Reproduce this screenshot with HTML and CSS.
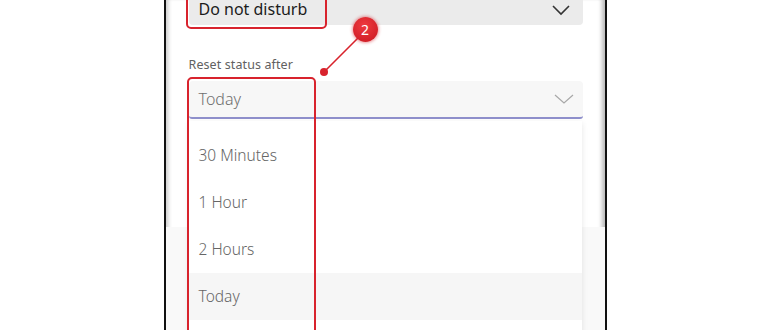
FILE: index.html
```html
<!DOCTYPE html>
<html lang="en">

<head>
  <title>Set status</title>
  <link rel="stylesheet" href="styles.css">
</head>

<body>
  <div class="frame">
    <div class="panel">
      <div class="select status-select">
        <span>Do not disturb</span>
        <svg class="chevron" width="20" height="12" viewBox="0 0 20 12">
          <polyline points="2,2 10,10 18,2" fill="none" stroke="#333" stroke-width="1.6" />
        </svg>
      </div>

      <label class="field-label">Reset status after</label>
      <div class="select reset-select">
        <span>Today</span>
        <svg class="chevron" width="20" height="12" viewBox="0 0 20 12">
          <polyline points="1,2 10,10 19,2" fill="none" stroke="#a8a8a8" stroke-width="1.2" />
        </svg>
      </div>
    </div>

    <div class="footer"></div>

    <!-- dropdown menu -->
    <ul class="menu">
      <li>30 Minutes</li>
      <li>1 Hour</li>
      <li>2 Hours</li>
      <li class="selected">Today</li>
    </ul>

    <!-- annotations -->
    <div class="mark mark-status"></div>
    <div class="mark mark-reset"></div>
    <svg class="leader" width="60" height="50" viewBox="0 0 60 50">
      <line x1="40" y1="8" x2="6" y2="42" stroke="#d8232d" stroke-width="1.6" />
      <circle cx="6" cy="42" r="4" fill="#d8232d" />
    </svg>
    <div class="badge">2</div>
  </div>
</body>

</html>
```

FILE: styles.css
```css
body {
  margin: 0;
  background-color: #ffffff;
  font-family: 'Noto Sans', 'Open Sans', sans-serif;
}

.frame {
  position: relative;
  width: 439px;
  height: 330px;
  margin: 0 auto;
  border-left: 2px solid #111111;
  border-right: 2px solid #111111;
  overflow: hidden;
  background-color: #ffffff;
  box-shadow: inset 5px 0 4px -3px #c8c8c8, inset -6px 0 4px -3px #b8b8b8;
}

.panel {
  display: flow-root;
  padding: 0 22px 0 23px;
  height: 227px;
}

.select {
  display: flex;
  align-items: center;
  justify-content: space-between;
  padding: 0 9px 0 10px;
  border-radius: 4px;
}

.status-select {
  margin-top: -11px;
  height: 36px;
  background-color: #ebebeb;
  font-size: 16px;
  line-height: 18px;
  color: #1b1b1b;
}

.status-select span {
  padding-top: 4px;
}

.status-select .chevron {
  margin-top: 5px;
  margin-right: 3px;
}

.field-label {
  display: block;
  margin-top: 31px;
  font-size: 12.5px;
  color: #616161;
  letter-spacing: 0.1px;
}

.reset-select {
  margin-top: 8px;
  height: 36px;
  background-color: #f7f7f7;
  border-bottom: 2px solid #8f90cc;
  border-radius: 4px 4px 3px 3px;
  font-size: 16px;
  font-weight: 300;
  color: #707070;
}

.footer {
  height: 103px;
  background-color: #f9f9f9;
}

.menu {
  position: absolute;
  top: 121px;
  left: 23px;
  width: 393px;
  margin: 0;
  padding: 11px 0 30px;
  list-style: none;
  background-color: #ffffff;
  box-shadow: 0 2px 6px rgba(0, 0, 0, 0.1);
}

.menu li {
  height: 47px;
  line-height: 47px;
  padding-left: 10px;
  font-size: 15.5px;
  font-weight: 300;
  color: #666666;
}

.menu li.selected {
  background-color: #f6f6f6;
}

.mark {
  position: absolute;
  border: 2px solid #d8232d;
  border-radius: 5px;
}

.mark-status {
  top: -12px;
  left: 20px;
  width: 137px;
  height: 37px;
}

.mark-reset {
  top: 77px;
  left: 21px;
  width: 125px;
  height: 280px;
}

.leader {
  position: absolute;
  top: 30px;
  left: 152px;
}

.badge {
  position: absolute;
  top: 17px;
  left: 187px;
  width: 25px;
  height: 25px;
  border-radius: 50%;
  background: radial-gradient(circle at 45% 35%, #ef3a3f, #c8151f);
  box-shadow: 0 0 3px 1px rgba(216, 35, 45, 0.45);
  color: #ffffff;
  font-size: 14px;
  line-height: 25px;
  text-align: center;
}
```
